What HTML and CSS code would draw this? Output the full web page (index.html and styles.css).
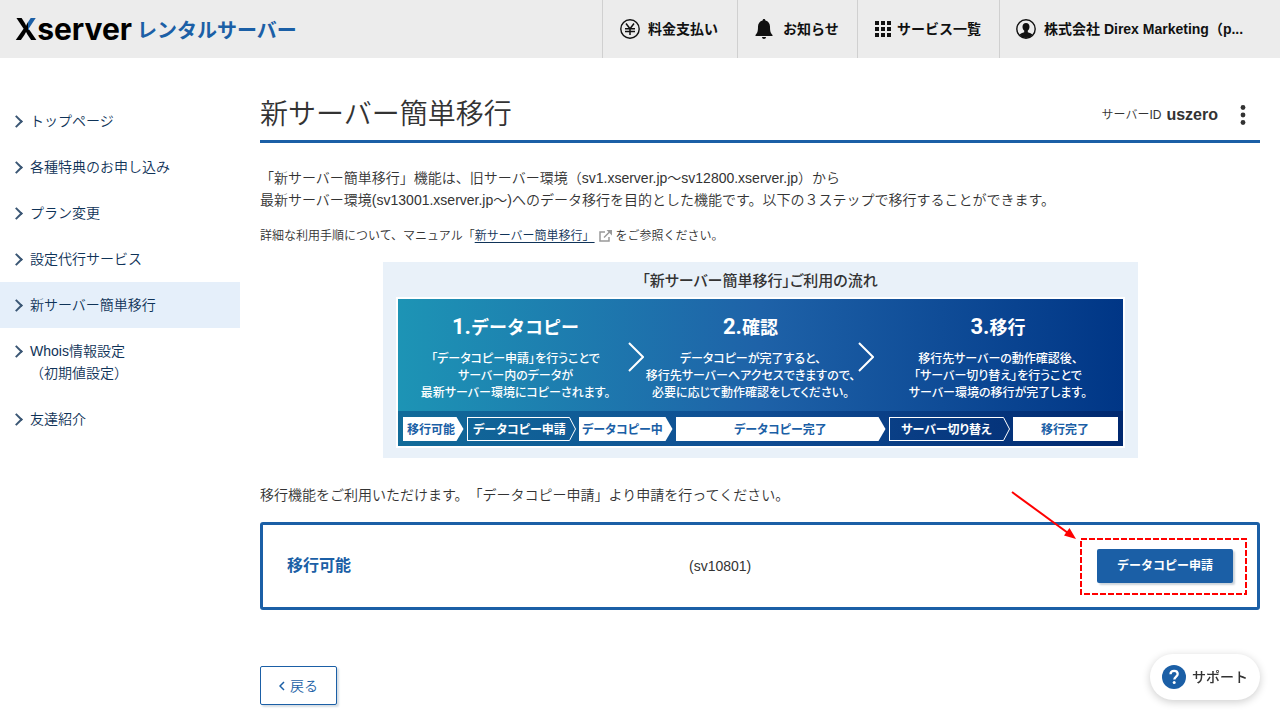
FILE: index.html
```html
<!DOCTYPE html>
<html lang="ja">
<head>
<meta charset="utf-8">
<meta name="viewport" content="width=device-width, initial-scale=1">
<title>新サーバー簡単移行</title>
<link rel="stylesheet" href="styles.css">
</head>
<body>
<header class="header">
  <a class="logo" href="#"><span class="logo-name"><span class="logo-x">X</span>server</span><span class="logo-service">レンタルサーバー</span></a>
  <nav class="tools">
    <a class="tool tool-pay" href="#">
      <svg width="20" height="20" viewBox="0 0 20 20" fill="none" stroke="#111"><circle cx="10" cy="10" r="9.2" stroke-width="1.4"/><path d="M6 4.500l4 5.200 4-5.200M10 9.700V16M5 9.700h10M5 12.500h10" stroke-width="1.500"/></svg>
      料金支払い
    </a>
    <a class="tool tool-news" href="#">
      <svg width="18" height="20" viewBox="0 0 18 20" fill="#111"><path d="M9 0c.9 0 1.400.6 1.400 1.500C13.300 2.200 15 4.600 15 7.500c0 5 .7 6.600 2.500 8.500v1H.5v-1C2.300 14.100 3 12.500 3 7.500c0-2.900 1.700-5.300 4.600-6C7.600.6 8.100 0 9 0zM7 18h4c0 1.200-.9 2-2 2s-2-.8-2-2z"/></svg>
      お知らせ
    </a>
    <a class="tool tool-services" href="#">
      <svg width="16" height="16" viewBox="0 0 16 16" fill="#111"><path d="M0 0h4v4H0zM6 0h4v4H6zM12 0h4v4h-4zM0 6h4v4H0zM6 6h4v4H6zM12 6h4v4h-4zM0 12h4v4H0zM6 12h4v4H6zM12 12h4v4h-4z"/></svg>
      サービス一覧
    </a>
    <a class="tool tool-user" href="#">
      <svg width="20" height="20" viewBox="0 0 20 20"><circle cx="10" cy="10" r="9.200" fill="none" stroke="#111" stroke-width="1.400"/><path d="M10 4c2.200 0 3.500 1.500 3.500 3.700 0 1.700-.7 3.100-1.700 3.900v1.600c1.900.7 3.900 1.300 4.800 2.500A9 9 0 0 1 10 19a9 9 0 0 1-6.600-3.300c.9-1.200 2.900-1.800 4.800-2.500v-1.600c-1-.8-1.700-2.200-1.700-3.900C6.500 5.500 7.800 4 10 4z" fill="#111"/></svg>
      株式会社 Direx Marketing（p...
    </a>
  </nav>
</header>

<div class="layout">
  <nav class="sidebar">
    <a class="side-link" href="#">トップページ</a>
    <a class="side-link" href="#">各種特典のお申し込み</a>
    <a class="side-link" href="#">プラン変更</a>
    <a class="side-link" href="#">設定代行サービス</a>
    <a class="side-link is-current" href="#" aria-current="page">新サーバー簡単移行</a>
    <a class="side-link" href="#">Whois情報設定<br>（初期値設定）</a>
    <a class="side-link" href="#">友達紹介</a>
  </nav>

  <main class="main">
    <div class="title-row">
      <h1 class="title">新サーバー簡単移行</h1>
      <div class="server">
        <span class="server-label">サーバーID</span>
        <strong class="server-id">uszero</strong>
        <button class="more" type="button" aria-label="メニュー"><svg width="6" height="20" viewBox="0 0 6 20" fill="#333"><circle cx="3" cy="2.500" r="2.400"/><circle cx="3" cy="10" r="2.400"/><circle cx="3" cy="17.500" r="2.400"/></svg></button>
      </div>
    </div>

    <p class="intro">「新サーバー簡単移行」機能は、旧サーバー環境（sv1.xserver.jp～sv12800.xserver.jp）から<br>最新サーバー環境(sv13001.xserver.jp～)へのデータ移行を目的とした機能です。以下の３ステップで移行することができます。</p>
    <p class="note">詳細な利用手順について、マニュアル「<a class="note-link" href="#">新サーバー簡単移行」</a><svg class="external" width="13" height="12" viewBox="0 0 13 12" fill="none" stroke="#999" stroke-width="1.500"><path d="M6 2H1v9h9V7"/><path d="M5 7.500L11 1.500"/><path d="M7.500 0H13V5.500z" fill="#999" stroke="none"/></svg>をご参照ください。</p>

    <section class="flow">
      <h2 class="flow-title">「新サーバー簡単移行」ご利用の流れ</h2>
      <div class="flow-panel">
        <div class="steps">
          <div class="step step-copy">
            <h3 class="step-title"><span class="step-number">1.</span>データコピー</h3>
            <p class="step-text">「データコピー申請」を行うことで<br>サーバー内のデータが<br>最新サーバー環境にコピーされます。</p>
          </div>
          <svg class="step-arrow" width="16" height="30" viewBox="0 0 16 30" fill="none" stroke="#fff" stroke-width="2"><path d="M1 1l14 14L1 29"/></svg>
          <div class="step">
            <h3 class="step-title"><span class="step-number">2.</span>確認</h3>
            <p class="step-text">データコピーが完了すると、<br>移行先サーバーへアクセスできますので、<br>必要に応じて動作確認をしてください。</p>
          </div>
          <svg class="step-arrow" width="16" height="30" viewBox="0 0 16 30" fill="none" stroke="#fff" stroke-width="2"><path d="M1 1l14 14L1 29"/></svg>
          <div class="step">
            <h3 class="step-title"><span class="step-number">3.</span>移行</h3>
            <p class="step-text">移行先サーバーの動作確認後、<br>「サーバー切り替え」を行うことで<br>サーバー環境の移行が完了します。</p>
          </div>
        </div>
        <div class="states">
          <span class="state state-ready tip">移行可能</span>
          <span class="state state-apply outline">データコピー申請<svg class="outline-tip" width="11" height="24" viewBox="0 0 11 24" fill="none" stroke="#fff"><path d="M0 .5h4.500L10.500 12l-6 11.500H0"/></svg></span>
          <span class="state state-copying tip">データコピー中</span>
          <span class="state state-copied tip">データコピー完了</span>
          <span class="state state-switch outline">サーバー切り替え<svg class="outline-tip" width="11" height="24" viewBox="0 0 11 24" fill="none" stroke="#fff"><path d="M0 .5h4.500L10.500 12l-6 11.500H0"/></svg></span>
          <span class="state state-done">移行完了</span>
        </div>
      </div>
    </section>

    <p class="status-note">移行機能をご利用いただけます。「データコピー申請」より申請を行ってください。</p>
    <section class="status">
      <strong class="status-name">移行可能</strong>
      <span class="status-server">(sv10801)</span>
      <div class="status-action">
        <button class="apply" type="button">データコピー申請</button>
        <svg class="marker" width="238" height="106" viewBox="0 0 238 106" fill="none" stroke="#f00" stroke-width="2"><rect x="71" y="49" width="165" height="55" stroke-dasharray="6 2"/><path d="M2 2l56 41"/><path d="M66 49L54 45.500L59.500 38z" fill="#f00" stroke="none"/></svg>
      </div>
    </section>
    <button class="back" type="button"><svg width="6" height="10" viewBox="0 0 6 10" fill="none" stroke="#1b5fa6" stroke-width="1.500"><path d="M5 1L1 5l4 4"/></svg>戻る</button>
  </main>
</div>

<button class="support" type="button"><svg width="24" height="24" viewBox="0 0 24 24" fill="none"><circle cx="12" cy="12" r="12" fill="#1b5fa6"/><path d="M8.500 9.300c0-2.200 1.500-3.500 3.600-3.500s3.600 1.300 3.600 3.200c0 2.400-3.400 2.700-3.400 5.600" stroke="#fff" stroke-width="2.300"/><circle cx="12.200" cy="17.600" r="1.500" fill="#fff"/></svg>サポート</button>
</body>
</html>
```
FILE: styles.css
```css
* { box-sizing: border-box; }
body {
  margin: 0;
  background: #fff;
  color: #333;
  font: 350 14px/22px "Liberation Sans", "Noto Sans CJK JP", sans-serif;
  text-spacing-trim: space-all;
}
h1, h2, h3, p { margin: 0; }
a { color: inherit; text-decoration: none; }
button { font: inherit; cursor: pointer; }
svg { display: block; flex: none; }

.header {
  display: flex;
  justify-content: space-between;
  height: 58px;
  padding-left: 15px;
  background: #ececec;
}
.logo { display: flex; align-items: center; gap: 5px; }
.logo-name { color: #000; font: 700 30px/32px Inter, sans-serif; }
.logo-x {
  background: conic-gradient(at 60% 52%, #1b5fa6 0 90deg, #000 90deg 360deg);
  background-clip: text;
  color: transparent;
}
.logo-service {
  padding-top: 2px;
  color: #1b5fa6;
  font: 700 20px/32px "Noto Sans CJK JP", sans-serif;
}
.tools { display: flex; }
.tool {
  display: flex;
  align-items: center;
  gap: 8px;
  padding-left: 17px;
  border-left: 1px solid #d0d0d0;
  color: #111;
  font-weight: 600;
  white-space: nowrap;
}
.tool-pay { width: 135px; }
.tool-news { width: 120px; gap: 10px; }
.tool-services { width: 142px; gap: 6px; }
.tool-user { width: 281px; padding-left: 16px; }

.layout { display: flex; }
.sidebar { flex: none; width: 240px; padding-top: 40px; }
.side-link {
  display: block;
  position: relative;
  padding: 12px 8px 12px 30px;
  color: #0f3358;
}
.side-link::before {
  content: "";
  position: absolute;
  left: 12px;
  top: 19px;
  width: 7px;
  height: 7px;
  border: solid #3a5674;
  border-width: 2px 2px 0 0;
  transform: rotate(45deg);
}
.is-current { background: #e5effa; }

.main { flex: 1; min-width: 0; padding: 36px 20px 14px; }
.title-row {
  display: flex;
  align-items: center;
  justify-content: space-between;
  padding-bottom: 4px;
  border-bottom: 3px solid #1b5fa6;
}
.title { font-size: 28px; line-height: 42px; font-weight: 350; }
.server { display: flex; align-items: center; gap: 5px; }
.server-label { font-size: 12px; }
.server-id { font-size: 16px; font-weight: 700; }
.more { margin-left: 10px; padding: 0 14px 0 7px; border: 0; background: none; }
.intro { margin-top: 24px; }
.note { margin-top: 14px; font-size: 12px; }
.note-link { color: #0f3358; text-decoration: underline; text-underline-offset: 2px; }
.external { display: inline-block; margin: 0 4px; vertical-align: -2px; }

.flow {
  max-width: 755px;
  margin: 15px auto 0;
  padding: 7px 13px 10px;
  background: #e9f1f9;
  font-family: "Noto Sans CJK JP", sans-serif;
  font-feature-settings: "palt";
}
.flow-title {
  padding-bottom: 6px;
  font-size: 15px;
  line-height: 22px;
  font-weight: 500;
  text-align: center;
}
.flow-panel { border: 2px solid #fff; color: #fff; }
.steps {
  display: grid;
  grid-template-columns: 230fr 16px 214fr 16px 249fr;
  align-items: center;
  padding: 15px 0 11px;
  background: linear-gradient(90deg, #1d94b5, #1e62a8 50%, #003686);
  text-align: center;
}
.step { min-width: 0; }
.step-copy { padding-left: 6px; }
.step-title { font-size: 18px; line-height: 24px; font-weight: 700; font-feature-settings: normal; }
.step-number { font-family: Roboto, sans-serif; font-size: 22px; }
.step-text {
  padding-top: 10px;
  font-size: 12px;
  line-height: 17px;
  font-weight: 500;
  white-space: nowrap;
}
.states {
  display: flex;
  gap: 3px;
  padding: 6px 5px 5px;
  background: linear-gradient(90deg, #116b99, #0f4c93 50%, #00286f);
}
.state {
  position: relative;
  height: 24px;
  min-width: 0;
  background: #fff;
  color: #1b5fa6;
  font-size: 12px;
  line-height: 24px;
  font-weight: 700;
  text-align: center;
  white-space: nowrap;
}
.tip { clip-path: polygon(0 0, calc(100% - 7px) 0, 100% 50%, calc(100% - 7px) 100%, 0 100%); }
.outline {
  background: linear-gradient(#fff, #fff) 0 0 / calc(100% - 10px) 1px no-repeat,
    linear-gradient(#fff, #fff) 0 100% / calc(100% - 10px) 1px no-repeat,
    linear-gradient(#fff, #fff) 0 0 / 1px 100% no-repeat;
  color: #fff;
}
.outline-tip { position: absolute; right: 0; top: 0; }
.state-ready { flex: 0 1 61px; padding-right: 4px; }
.state-apply { flex: 0 1 109px; padding-right: 3px; }
.state-copying { flex: 0 1 94px; padding-right: 6px; }
.state-copied { flex: 1 1 210px; }
.state-switch { flex: 0 1 121px; padding-right: 5px; }
.state-done { flex: 0 1 105px; }

.status-note { margin-top: 26px; }
.status {
  display: grid;
  grid-template-columns: 400fr 406fr auto;
  align-items: center;
  margin-top: 16px;
  padding: 24px;
  border: 3px solid #1b5fa6;
  border-radius: 3px;
}
.status-name { color: #1b5fa6; font-size: 16px; font-weight: 700; }
.status-action { position: relative; }
.apply {
  width: 136px;
  height: 34px;
  padding: 0;
  border: 0;
  border-radius: 2px;
  background: #1b5fa6;
  box-shadow: 2px 2px 2px #ccd3da;
  color: #fff;
  font-size: 12px;
  font-weight: 700;
}
.marker { position: absolute; right: -15px; bottom: -13px; pointer-events: none; }
.back {
  display: flex;
  align-items: center;
  justify-content: center;
  gap: 5px;
  width: 77px;
  height: 39px;
  margin-top: 56px;
  border: 1px solid #1b5fa6;
  border-radius: 2px;
  background: #fff;
  box-shadow: 2px 2px 2px #d5dde4;
  color: #1b5fa6;
}
.support {
  position: fixed;
  right: 20px;
  bottom: 20px;
  display: flex;
  align-items: center;
  gap: 6px;
  height: 46px;
  padding: 0 12px;
  border: 0;
  border-radius: 23px;
  background: #fff;
  box-shadow: 0 2px 8px rgba(0, 0, 0, 0.2);
  color: #333;
  font-weight: 500;
}
```
